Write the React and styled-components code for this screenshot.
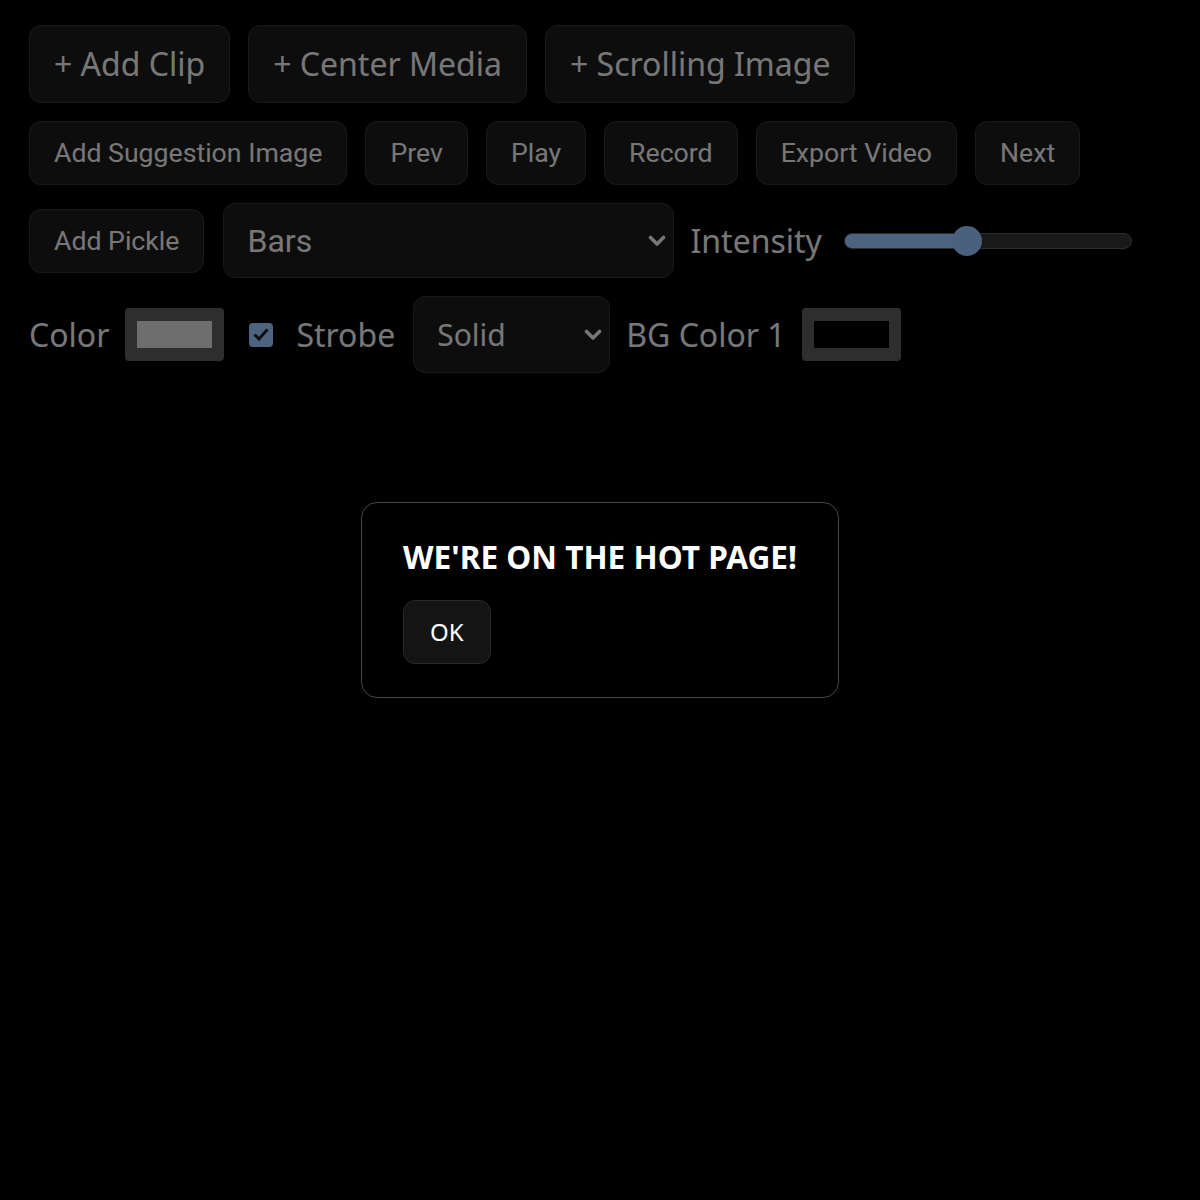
import React, { useState } from 'react'
import styled, { createGlobalStyle } from 'styled-components'

const GlobalStyle = createGlobalStyle`
    * {
        box-sizing: border-box;
    }

    html, body {
        margin: 0;
        background: #000;
        color: #eee;
        font-family: "Noto Sans", "Open Sans", sans-serif;
    }
`

const Page = styled.div`
    display: flex;
    flex-direction: column;
    gap: 18px;
    padding: 25px 29px;
    min-height: 1200px;
`

const Row = styled.div`
    display: flex;
    align-items: center;
    gap: ${({ $gap }) => $gap || 18}px;
`

const BigButton = styled.button`
    height: 78px;
    padding: 0 24px;
    font-family: "Noto Sans", "Open Sans", sans-serif;
    font-size: 32px;
    line-height: 1.3;
    color: #eee;
    background: #1a1a1a;
    border: 1px solid #333;
    border-radius: 12px;
    cursor: pointer;
`

const ToolButton = styled.button`
    height: 64px;
    padding: 0 24px;
    font-family: Roboto, "Liberation Sans", sans-serif;
    font-size: 26.67px;
    color: #eee;
    background: #1a1a1a;
    border: 1px solid #333;
    border-radius: 12px;
    cursor: pointer;
`

const Label = styled.span`
    font-size: ${({ $size }) => $size || 32}px;
    color: #eee;
    margin-left: ${({ $ml }) => $ml || 0}px;
    white-space: nowrap;
`

const SelectWrap = styled.div`
    position: relative;
    display: inline-flex;
    margin-left: ${({ $ml }) => $ml || 0}px;
`

const Select = styled.select`
    appearance: none;
    width: ${({ $width }) => $width}px;
    height: ${({ $height }) => $height}px;
    padding: 0 40px 0 23px;
    font-family: ${({ $font }) => $font};
    font-size: ${({ $size }) => $size}px;
    color: #eee;
    background: #1a1a1a;
    border: 1px solid #333;
    border-radius: 12px;
    outline: none;
`

const Chevron = styled.svg`
    position: absolute;
    right: 8px;
    top: 50%;
    width: 18px;
    height: 12px;
    transform: translateY(-50%);
    pointer-events: none;
`

const Range = styled.input`
    appearance: none;
    width: 288px;
    height: 30px;
    margin: 0 0 0 ${({ $ml }) => $ml || 0}px;
    background: transparent;

    &::-webkit-slider-runnable-track {
        height: 16px;
        border-radius: 8px;
        border: 1px solid #5a5a5a;
        background: linear-gradient(to right, #99c8ff ${({ $fill }) => $fill}%, #333 ${({ $fill }) => $fill}%);
    }

    &::-webkit-slider-thumb {
        appearance: none;
        width: 30px;
        height: 30px;
        margin-top: -8px;
        border-radius: 50%;
        background: #93c2f8;
        border: none;
    }
`

const ColorInput = styled.input`
    appearance: none;
    width: 99px;
    height: 53px;
    padding: 0;
    border: none;
    border-radius: 4px;
    background: #5c5c5c;
    cursor: pointer;

    &::-webkit-color-swatch-wrapper {
        padding: 13px 12px;
    }

    &::-webkit-color-swatch {
        border: none;
        border-radius: 0;
    }
`

const CheckLabel = styled.label`
    display: inline-flex;
    margin: 0 7px 0 9px;
    cursor: pointer;

    input {
        display: none;
    }
`

const CheckBox = styled.span`
    display: flex;
    align-items: center;
    justify-content: center;
    width: 24px;
    height: 24px;
    border-radius: 4px;
    background: ${({ $on }) => ($on ? '#99c8ff' : '#333')};
`

const Overlay = styled.div`
    position: fixed;
    inset: 0;
    display: flex;
    align-items: center;
    justify-content: center;
    background: rgba(0, 0, 0, 0.5);
`

const Dialog = styled.div`
    padding: 35px 41px 33px;
    background: #000;
    border: 1px solid #474747;
    border-radius: 16px;

    h2 {
        margin: 0 0 24px;
        font-size: 31.6px;
        font-weight: 700;
        line-height: 1.2;
        color: #fff;
        white-space: nowrap;
    }
`

const OkButton = styled.button`
    height: 64px;
    padding: 0 26px;
    font-family: "Noto Sans", "Open Sans", sans-serif;
    font-size: 24px;
    color: #fff;
    background: #141414;
    border: 1px solid #2a2a2a;
    border-radius: 12px;
    cursor: pointer;
`

function Select2({ options, value, onChange, ...rest }) {
    return (
        <SelectWrap $ml={rest.$ml}>
            <Select value={value} onChange={(e) => onChange(e.target.value)} {...rest}>
                {options.map((o) => <option key={o}>{o}</option>)}
            </Select>
            <Chevron viewBox='0 0 18 12'>
                <path d='M2.5 2.5L9 9l6.5-6.5' fill='none' stroke='#eee' strokeWidth='3.6' strokeLinecap='round' strokeLinejoin='round' />
            </Chevron>
        </SelectWrap>
    )
}

export default function App() {
    const [mode, setMode] = useState('Bars')
    const [fillMode, setFillMode] = useState('Solid')
    const [intensity, setIntensity] = useState(42)
    const [strobe, setStrobe] = useState(true)
    const [color, setColor] = useState('#dddddd')
    const [bg1, setBg1] = useState('#000000')
    const [showDialog, setShowDialog] = useState(true)

    // track fill ends at the thumb centre (thumb is 30px on a 288px track)
    const fill = ((15 + (intensity / 100) * 258) / 288) * 100

    return (
        <>
            <GlobalStyle />
            <Page>
                <Row>
                    <BigButton>+ Add Clip</BigButton>
                    <BigButton>+ Center Media</BigButton>
                    <BigButton>+ Scrolling Image</BigButton>
                </Row>
                <Row>
                    <ToolButton>Add Suggestion Image</ToolButton>
                    <ToolButton>Prev</ToolButton>
                    <ToolButton>Play</ToolButton>
                    <ToolButton>Record</ToolButton>
                    <ToolButton>Export Video</ToolButton>
                    <ToolButton>Next</ToolButton>
                </Row>
                <Row $gap={14}>
                    <ToolButton>Add Pickle</ToolButton>
                    <Select2
                        $ml={5}
                        $width={451}
                        $height={75}
                        $size={32}
                        $font='Roboto, "Liberation Sans", sans-serif'
                        options={['Bars', 'Wave', 'Circle']}
                        value={mode}
                        onChange={setMode}
                    />
                    <Label $ml={2}>Intensity</Label>
                    <Range
                        type='range'
                        min={0}
                        max={100}
                        value={intensity}
                        $fill={fill}
                        $ml={8}
                        onChange={(e) => setIntensity(Number(e.target.value))}
                    />
                </Row>
                <Row $gap={16}>
                    <Label>Color</Label>
                    <ColorInput type='color' value={color} onChange={(e) => setColor(e.target.value)} />
                    <CheckLabel>
                        <input type='checkbox' checked={strobe} onChange={(e) => setStrobe(e.target.checked)} />
                        <CheckBox $on={strobe}>
                            {strobe && (
                                <svg width='18' height='18' viewBox='0 0 18 18'>
                                    <path d='M3.5 9.5l3.5 3.5 7.5-8.5' fill='none' stroke='#1e1e1e' strokeWidth='3' strokeLinecap='square' />
                                </svg>
                            )}
                        </CheckBox>
                    </CheckLabel>
                    <Label>Strobe</Label>
                    <Select2
                        $ml={2}
                        $width={197}
                        $height={77}
                        $size={30}
                        $font='"Noto Sans", "Open Sans", sans-serif'
                        options={['Solid', 'Gradient']}
                        value={fillMode}
                        onChange={setFillMode}
                    />
                    <Label>BG Color 1</Label>
                    <ColorInput type='color' value={bg1} onChange={(e) => setBg1(e.target.value)} />
                </Row>
            </Page>
            {showDialog && (
                <Overlay>
                    <Dialog>
                        <h2>WE'RE ON THE HOT PAGE!</h2>
                        <OkButton onClick={() => setShowDialog(false)}>OK</OkButton>
                    </Dialog>
                </Overlay>
            )}
        </>
    )
}
